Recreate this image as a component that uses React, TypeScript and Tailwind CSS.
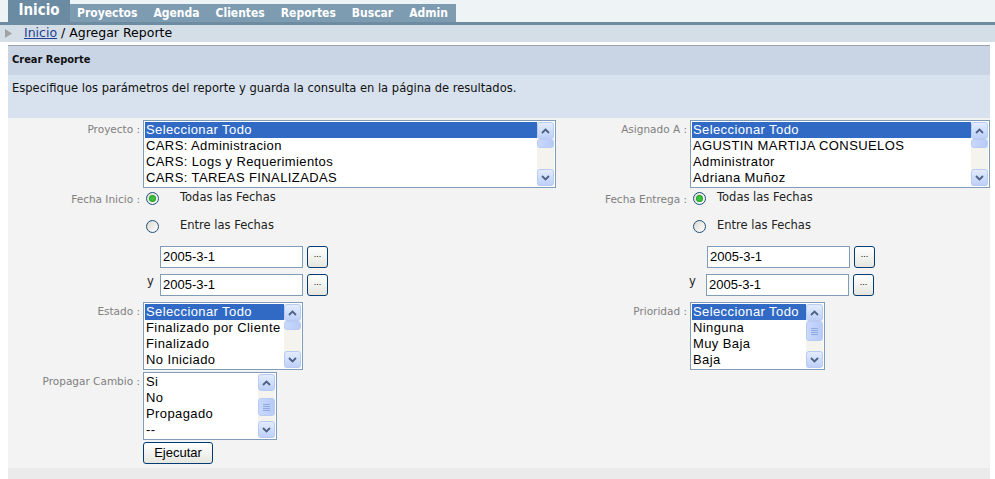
import React from 'react';

const Chevron: React.FC<{ up?: boolean }> = ({ up }) => (
  <svg width="9" height="6" viewBox="0 0 9 6">
    <path
      d={up ? 'M1 5 L4.5 1.5 L8 5' : 'M1 1 L4.5 4.5 L8 1'}
      fill="none"
      stroke="#4d6185"
      strokeWidth="1.8"
    />
  </svg>
);

const ScrollBtn: React.FC<{ up?: boolean }> = ({ up }) => (
  <div className="flex h-[17px] w-[17px] items-center justify-center rounded-[3px] border border-[#b9cbf3] bg-gradient-to-b from-[#e3ecfd] to-[#bdd0f8]">
    <Chevron up={up} />
  </div>
);

const ScrollBar: React.FC<{ offset: number; size: number; grip?: boolean }> = ({ offset, size, grip }) => (
  <div className="flex h-full w-[17px] flex-col bg-[#f4f3ee]">
    <ScrollBtn up />
    <div
      className="flex items-center justify-center rounded-[3px] border border-[#b9cbf3] bg-gradient-to-r from-[#c9d8fc] to-[#b7cbf7]"
      style={{ marginTop: offset, height: size }}
    >
      {grip && (
        <div className="flex flex-col gap-[1px]">
          <div className="h-[1px] w-[7px] bg-[#8ea9e4]" />
          <div className="h-[1px] w-[7px] bg-[#8ea9e4]" />
          <div className="h-[1px] w-[7px] bg-[#8ea9e4]" />
          <div className="h-[1px] w-[7px] bg-[#8ea9e4]" />
        </div>
      )}
    </div>
    <div className="flex-1" />
    <ScrollBtn />
  </div>
);

const ListBox: React.FC<{
  items: string[];
  widthClass: string;
  selected?: number;
  offset: number;
  size: number;
  grip?: boolean;
}> = ({ items, widthClass, selected, offset, size, grip }) => (
  <div className={`flex h-[68px] border border-[#7f9db9] bg-white p-[1px] ${widthClass}`}>
    <div className="min-w-0 flex-1 overflow-hidden">
      {items.map((it, i) => (
        <div
          key={i}
          className={`h-[16px] whitespace-nowrap pl-[1px] font-['Liberation_Sans',Arial,sans-serif] text-[13px] leading-[16px] tracking-[0.4px] ${
            i === selected ? 'bg-[#316ac5] text-white' : 'text-black'
          }`}
        >
          {it}
        </div>
      ))}
    </div>
    <ScrollBar offset={offset} size={size} grip={grip} />
  </div>
);

const Radio: React.FC<{ checked?: boolean }> = ({ checked }) => (
  <div className="ml-[3px] flex h-[13px] w-[13px] items-center justify-center rounded-full border border-[#1c5180] bg-gradient-to-br from-[#dcd9ce] to-white">
    {checked && <div className="h-[5px] w-[5px] rounded-full bg-[#3fbf3f] ring-1 ring-[#21a121]" />}
  </div>
);

const DateInput: React.FC = () => (
  <div className="flex items-center gap-[4px]">
    <div className="flex h-[22px] w-[143px] items-center border border-[#7f9db9] bg-white pl-[2px] font-['Liberation_Sans',Arial,sans-serif] text-[13px] text-black">
      2005-3-1
    </div>
    <div className="flex h-[22px] w-[21px] items-center justify-center rounded-[3px] border border-[#003c74] bg-gradient-to-b from-white to-[#e6e6e0] pb-[4px] font-['Liberation_Sans',Arial,sans-serif] text-[9px] text-black">
      ...
    </div>
  </div>
);

const Fechas: React.FC<{ textGap: string; yPad: string }> = ({ textGap, yPad }) => (
  <div className="flex flex-col pb-[4px] font-['DejaVu_Sans',Verdana,sans-serif] text-[11.5px] text-[#222]">
    <div className="flex h-[16px] items-center">
      <Radio checked />
      <span className={textGap}>Todas las Fechas</span>
    </div>
    <div className="mt-[12px] flex h-[16px] items-center">
      <Radio />
      <span className={textGap}>Entre las Fechas</span>
    </div>
    <div className="mt-[12px] flex pl-[17px]">
      <DateInput />
    </div>
    <div className="mt-[6px] flex">
      <span className={`w-[17px] leading-[14px] ${yPad}`}>y</span>
      <DateInput />
    </div>
  </div>
);

const Label: React.FC<{ children: React.ReactNode }> = ({ children }) => (
  <div className="pr-[3px] pt-[1px] text-right font-['DejaVu_Sans',Verdana,sans-serif] text-[10.5px] leading-[16px] text-[#808080]">
    {children}
  </div>
);

const App: React.FC = () => {
  return (
    <div className="h-[479px] w-[995px] overflow-hidden bg-white">
      {/* Tabs */}
      <div className="flex h-[22px] items-end bg-[#eef3f6] pl-[8px] font-['DejaVu_Sans_Condensed','DejaVu_Sans',sans-serif] font-bold font-stretch-condensed text-white">
        <div className="flex h-[22px] w-[62px] items-center justify-center bg-[#6b8ba2] pb-[1px] text-[15px]">
          Inicio
        </div>
        <div className="flex h-[18px] items-center gap-[16px] bg-[#7d9bb1] pl-[7px] pr-[8px] text-[12px]">
          <span>Proyectos</span>
          <span>Agenda</span>
          <span>Clientes</span>
          <span>Reportes</span>
          <span>Buscar</span>
          <span>Admin</span>
        </div>
      </div>
      <div className="h-[3px] bg-[#6e8ca1]" />

      {/* Breadcrumb */}
      <div className="flex h-[17px] items-center bg-[#d4dee7] font-['DejaVu_Sans',Verdana,sans-serif] text-[12.5px] text-black">
        <svg width="8" height="9" viewBox="0 0 8 9" className="ml-[5px]">
          <path d="M0 0 L7 4.5 L0 9 Z" fill="#a3a3a3" />
        </svg>
        <span className="ml-[11px] text-[#1f3f93] underline">Inicio</span>
        <span>&nbsp;/ Agregar Reporte</span>
      </div>
      <div className="h-[3px]" />

      {/* Panel */}
      <div className="ml-[8px] w-[982px] border-t border-[#9ca6b0]">
        <div className="flex h-[29px] items-center bg-[#c9d5e5] pl-[4px] font-['DejaVu_Sans_Condensed','DejaVu_Sans',sans-serif] text-[11px] font-bold font-stretch-condensed text-[#111]">
          Crear Reporte
        </div>
        <div className="h-[43px] bg-[#d7e2ee] pl-[4px] pt-[6px] font-['DejaVu_Sans_Condensed','DejaVu_Sans',sans-serif] text-[12.8px] leading-[14px] font-stretch-condensed text-[#111]">
          Especifique los parámetros del reporte y guarda la consulta en la página de resultados.
        </div>

        {/* Form */}
        <div className="grid grid-cols-[135px_447px_100px_300px] gap-y-[2px] bg-[#f3f3f3] pb-[4px] pt-[2px]">
          <Label>Proyecto :</Label>
          <ListBox
            widthClass="w-[413px]"
            selected={0}
            offset={0}
            size={9}
            items={['Seleccionar Todo', 'CARS: Administracion', 'CARS: Logs y Requerimientos', 'CARS: TAREAS FINALIZADAS']}
          />
          <Label>Asignado A :</Label>
          <ListBox
            widthClass="w-[300px]"
            selected={0}
            offset={0}
            size={9}
            items={['Seleccionar Todo', 'AGUSTIN MARTIJA CONSUELOS', 'Administrator', 'Adriana Muñoz']}
          />

          <Label>Fecha Inicio :</Label>
          <Fechas textGap="ml-[21px]" yPad="pl-[4px]" />
          <Label>Fecha Entrega :</Label>
          <Fechas textGap="ml-[11px]" yPad="pl-0 -ml-[1px]" />

          <Label>Estado :</Label>
          <ListBox
            widthClass="w-[160px]"
            selected={0}
            offset={0}
            size={9}
            items={['Seleccionar Todo', 'Finalizado por Cliente', 'Finalizado', 'No Iniciado']}
          />
          <Label>Prioridad :</Label>
          <ListBox
            widthClass="w-[135px]"
            selected={0}
            offset={0}
            size={20}
            grip
            items={['Seleccionar Todo', 'Ninguna', 'Muy Baja', 'Baja']}
          />

          <Label>Propagar Cambio :</Label>
          <ListBox widthClass="w-[134px]" offset={7} size={18} grip items={['Si', 'No', 'Propagado', '--']} />
          <div className="col-span-2" />

          <div />
          <div>
            <button className="flex h-[22px] w-[70px] items-center justify-center rounded-[3px] border border-[#003c74] bg-gradient-to-b from-white to-[#e6e6e0] font-['Liberation_Sans',Arial,sans-serif] text-[13px] text-black">
              Ejecutar
            </button>
          </div>
          <div className="col-span-2" />
        </div>
        <div className="h-[16px] bg-[#ebebeb]" />
      </div>
    </div>
  );
};

export default App;
